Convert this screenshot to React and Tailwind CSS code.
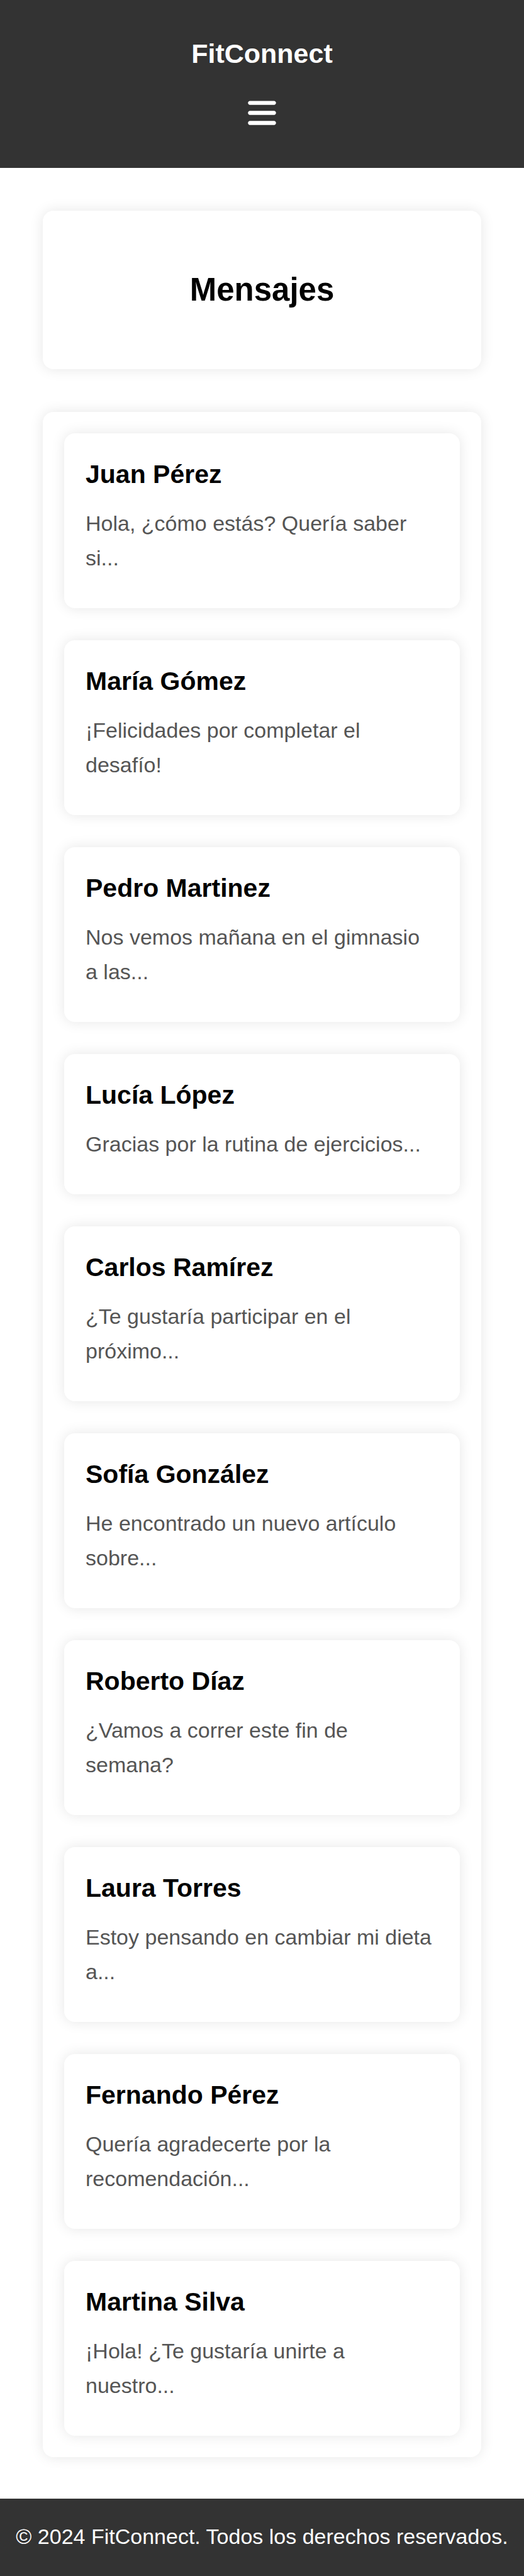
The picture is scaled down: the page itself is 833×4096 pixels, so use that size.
import { FaBars } from "react-icons/fa6";

const messages = [
  { name: "Juan Pérez", text: "Hola, ¿cómo estás? Quería saber si..." },
  { name: "María Gómez", text: "¡Felicidades por completar el desafío!" },
  { name: "Pedro Martinez", text: "Nos vemos mañana en el gimnasio a\u00a0las..." },
  { name: "Lucía López", text: "Gracias por la rutina de ejercicios..." },
  { name: "Carlos Ramírez", text: "¿Te gustaría participar en el próximo..." },
  { name: "Sofía González", text: "He encontrado un nuevo artículo sobre..." },
  { name: "Roberto Díaz", text: "¿Vamos a correr este fin de semana?" },
  { name: "Laura Torres", text: "Estoy pensando en cambiar mi dieta a..." },
  { name: "Fernando Pérez", text: "Quería agradecerte por la recomendación..." },
  { name: "Martina Silva", text: "¡Hola! ¿Te gustaría unirte a nuestro..." },
];

function Header() {
  return (
    <header className="flex flex-col items-center gap-[35px] bg-[#333] pt-[51px] pb-[62px] text-white">
      <div className="text-[43px] leading-[68px] font-bold">FitConnect</div>
      <button type="button" aria-label="Menú" className="block">
        <FaBars className="h-[51px] w-[45px]" aria-hidden="true" />
      </button>
    </header>
  );
}

function MessageCard({ name, text }) {
  return (
    <li className="rounded-[17px] bg-white px-[34px] pt-[34px] pb-[52px] shadow-[0_0_21px_rgba(0,0,0,0.1)]">
      <h2 className="text-[41px] leading-[62px] font-bold text-black">{name}</h2>
      <p className="mt-5 text-[34px] leading-[55px] text-[#555]">{text}</p>
    </li>
  );
}

export default function App() {
  return (
    <div className="bg-white font-['Liberation_Sans',Arial,sans-serif]">
      <Header />
      <main className="flex flex-col gap-[68px] px-[68px] pt-[68px] pb-[66px]">
        <section className="rounded-[17px] bg-white px-[34px] py-[85px] text-center shadow-[0_0_21px_rgba(0,0,0,0.1)]">
          <h1 className="text-[51px] leading-[82px] font-bold text-black">Mensajes</h1>
        </section>
        <ul className="flex flex-col gap-[51px] rounded-[17px] bg-white p-[34px] shadow-[0_0_21px_rgba(0,0,0,0.1)]">
          {messages.map((message) => (
            <MessageCard key={message.name} {...message} />
          ))}
        </ul>
      </main>
      <footer className="bg-[#333] pt-[33px] pb-[35px] text-center text-[34px] leading-[55px] text-white">
        <p>© 2024 FitConnect. Todos los derechos reservados.</p>
      </footer>
    </div>
  );
}
